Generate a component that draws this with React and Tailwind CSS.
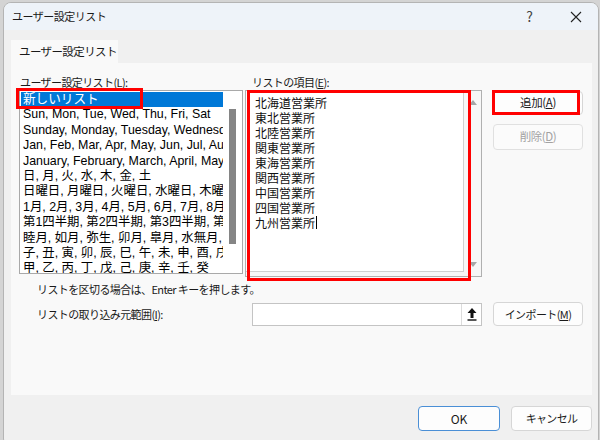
import React from "react";

const jp = { fontFamily: '"Noto Sans CJK JP", "Noto Sans", sans-serif' };
const listFont = { fontFamily: '"Liberation Sans", "Noto Sans CJK JP", sans-serif' };

const leftItems = [
  "Sun, Mon, Tue, Wed, Thu, Fri, Sat",
  "Sunday, Monday, Tuesday, Wednesday, Thursday, Friday, Saturday",
  "Jan, Feb, Mar, Apr, May, Jun, Jul, Aug, Sep, Oct, Nov, Dec",
  "January, February, March, April, May, June, July",
  "日, 月, 火, 水, 木, 金, 土",
  "日曜日, 月曜日, 火曜日, 水曜日, 木曜日, 金曜日, 土曜日",
  "1月, 2月, 3月, 4月, 5月, 6月, 7月, 8月, 9月",
  "第1四半期, 第2四半期, 第3四半期, 第4四半期",
  "睦月, 如月, 弥生, 卯月, 皐月, 水無月, 文月",
  "子, 丑, 寅, 卯, 辰, 巳, 午, 未, 申, 酉, 戌, 亥",
  "甲, 乙, 丙, 丁, 戊, 己, 庚, 辛, 壬, 癸",
];

const rightItems = [
  "北海道営業所",
  "東北営業所",
  "北陸営業所",
  "関東営業所",
  "東海営業所",
  "関西営業所",
  "中国営業所",
  "四国営業所",
  "九州営業所",
];

function Btn({ children, className = "", disabled = false }) {
  return (
    <div
      className={`flex items-center justify-center whitespace-nowrap rounded-[4px] border text-[11.5px] tracking-[-0.4px] ${
        disabled
          ? "border-[#e0e0e0] bg-[#fbfbfb] text-[#a2a2a2]"
          : "border-[#d6d6d6] bg-[#fdfdfd] text-[#1a1a1a]"
      } ${className}`}
      style={jp}
    >
      {children}
    </div>
  );
}

export default function App() {
  return (
    <div className="w-[600px] h-[440px] overflow-hidden bg-[#d4d4d4] pl-[3px] pt-[2px]">
      <div className="relative flex h-[445px] w-[596px] flex-col overflow-hidden rounded-[8px] border border-[#b4b4b4] bg-[#f0f0f0]">
        {/* Title bar */}
        <div className="flex h-[27px] shrink-0 items-center bg-[#eef3f9] pl-[8px] pr-[14px]">
          <span className="whitespace-nowrap text-[11px] tracking-[-0.5px] text-[#1a1a1a]" style={jp}>
            ユーザー設定リスト
          </span>
          <div className="flex-1" />
          <span className="mr-[37px] text-[14px] text-[#444]" style={jp}>
            ?
          </span>
          <svg width="12" height="12" viewBox="0 0 12 12" className="mr-[2px]">
            <path d="M1 1 L11 11 M11 1 L1 11" stroke="#222" strokeWidth="1.1" />
          </svg>
        </div>

        {/* Body */}
        <div className="flex flex-col px-[7px] pt-[10px]">
          {/* Tab */}
          <div
            className="flex h-[23px] w-[107px] items-center whitespace-nowrap bg-[#f9f9f9] pl-[8px] text-[11.5px] tracking-[-0.6px] text-[#1a1a1a]"
            style={jp}
          >
            ユーザー設定リスト
          </div>

          {/* Panel */}
          <div className="flex h-[332px] w-[581px] flex-col bg-[#f9f9f9] pt-[11px]">
            <div className="flex">
              {/* Left column */}
              <div className="ml-[8px] flex w-[224px] flex-col">
                <div
                  className="h-[16px] whitespace-nowrap pl-[1px] text-[11px] leading-[16px] tracking-[-0.6px] text-[#1a1a1a]"
                  style={jp}
                >
                  ユーザー設定リスト(<span className="underline">L</span>):
                </div>
                <div className="relative h-[184px] border border-[#a9a9a9] bg-white">
                  <div className="flex h-full">
                    <div className="w-[203px] overflow-hidden pt-[1px] pl-[1px]">
                      <div
                        className="h-[15.4px] whitespace-nowrap bg-[#0078d7] pl-[2px] text-[12.6px] leading-[15.4px] text-white"
                        style={listFont}
                      >
                        新しいリスト
                      </div>
                      {leftItems.map((t) => (
                        <div
                          key={t}
                          className="h-[15.4px] whitespace-nowrap pl-[2px] text-[12.4px] leading-[15.4px] text-black"
                          style={listFont}
                        >
                          {t}
                        </div>
                      ))}
                    </div>
                    <div className="flex flex-1 flex-col items-center pt-[18px]">
                      <div className="h-[135px] w-[7px] bg-[#858585]" />
                    </div>
                  </div>
                  {/* red annotation */}
                  <div className="absolute left-[-4px] top-[-3px] h-[21px] w-[127px] border-[3px] border-[#ff0000]" />
                </div>
              </div>

              {/* Right column */}
              <div className="ml-[2px] flex w-[237px] flex-col">
                <div
                  className="h-[16px] whitespace-nowrap pl-[7px] text-[11px] leading-[16px] tracking-[-0.6px] text-[#1a1a1a]"
                  style={jp}
                >
                  リストの項目(<span className="underline">E</span>):
                </div>
                <div className="relative h-[187px] border border-[#b0b0b0] bg-[#f7f7f7]">
                  <div className="flex h-full">
                    <div className="mb-[4px] w-[218px] border-r border-b border-[#d0d0d0] bg-white pl-[9px] pt-[4px]">
                      {rightItems.map((t, i) => (
                        <div
                          key={t}
                          className="flex h-[15px] items-center whitespace-nowrap text-[12px] leading-[15px] text-[#111]"
                          style={jp}
                        >
                          {t}
                          {i === rightItems.length - 1 && (
                            <span className="ml-[1px] inline-block h-[13px] w-[1px] bg-black" />
                          )}
                        </div>
                      ))}
                    </div>
                    <div className="flex flex-1 flex-col items-center justify-between pb-[9px] pt-[9px] pl-[1px]">
                      <svg width="8" height="5" viewBox="0 0 8 5">
                        <path d="M0 5 L4 0 L8 5 Z" fill="#a6a6a6" />
                      </svg>
                      <svg width="8" height="5" viewBox="0 0 8 5">
                        <path d="M0 0 L8 0 L4 5 Z" fill="#a6a6a6" />
                      </svg>
                    </div>
                  </div>
                  {/* red annotation */}
                  <div className="absolute left-[1px] top-[-1px] h-[191px] w-[224px] border-[3px] border-[#ff0000]" />
                </div>
              </div>

              {/* Buttons */}
              <div className="ml-[11px] flex flex-col pt-[17px]">
                <div className="relative">
                  <Btn className="h-[24px] w-[90px]">
                    追加(<span className="underline">A</span>)
                  </Btn>
                  <div className="absolute left-[-1px] top-[-1px] h-[25px] w-[88px] border-[3px] border-[#ff0000]" />
                </div>
                <Btn disabled className="mt-[9px] h-[26px] w-[90px]">
                  削除(<span className="underline">D</span>)
                </Btn>
              </div>
            </div>

            {/* Bottom rows */}
            <div
              className="ml-[26px] mt-[4px] h-[16px] whitespace-nowrap text-[11px] leading-[16px] tracking-[-0.6px] text-[#1a1a1a]"
              style={jp}
            >
              リストを区切る場合は、Enter キーを押します。
            </div>
            <div className="mt-[5px] flex items-center">
              <div
                className="ml-[26px] w-[215px] whitespace-nowrap text-[11px] tracking-[-0.6px] text-[#1a1a1a]"
                style={jp}
              >
                リストの取り込み元範囲(<span className="underline">I</span>):
              </div>
              <div className="flex h-[23px] w-[230px] items-stretch border border-[#c4c4c4] bg-white">
                <div className="flex-1" />
                <div className="flex w-[20px] items-center justify-center border-l border-[#dcdcdc] bg-white">
                  <svg width="10" height="13" viewBox="0 0 10 13">
                    <path d="M5 0 L9.5 5 L6.5 5 L6.5 10 L3.5 10 L3.5 5 L0.5 5 Z" fill="#111" />
                    <rect x="0.5" y="11.3" width="9" height="1.4" fill="#111" />
                  </svg>
                </div>
              </div>
              <Btn className="ml-[11px] h-[24px] w-[90px] !text-[11px] !tracking-[-0.6px]">
                インポート(<span className="underline">M</span>)
              </Btn>
            </div>
          </div>
        </div>

        {/* Footer */}
        <div className="flex justify-end gap-[11px] pr-[6px] pt-[11px]">
          <div
            className="flex h-[25px] w-[82px] items-center justify-center rounded-[4px] border-[1.5px] border-[#4a8fd6] bg-[#fdfdfd] text-[12px] text-[#1a1a1a]"
            style={jp}
          >
            OK
          </div>
          <Btn className="h-[25px] w-[81px] !text-[11px] !tracking-[-0.7px]">キャンセル</Btn>
        </div>
      </div>
    </div>
  );
}
